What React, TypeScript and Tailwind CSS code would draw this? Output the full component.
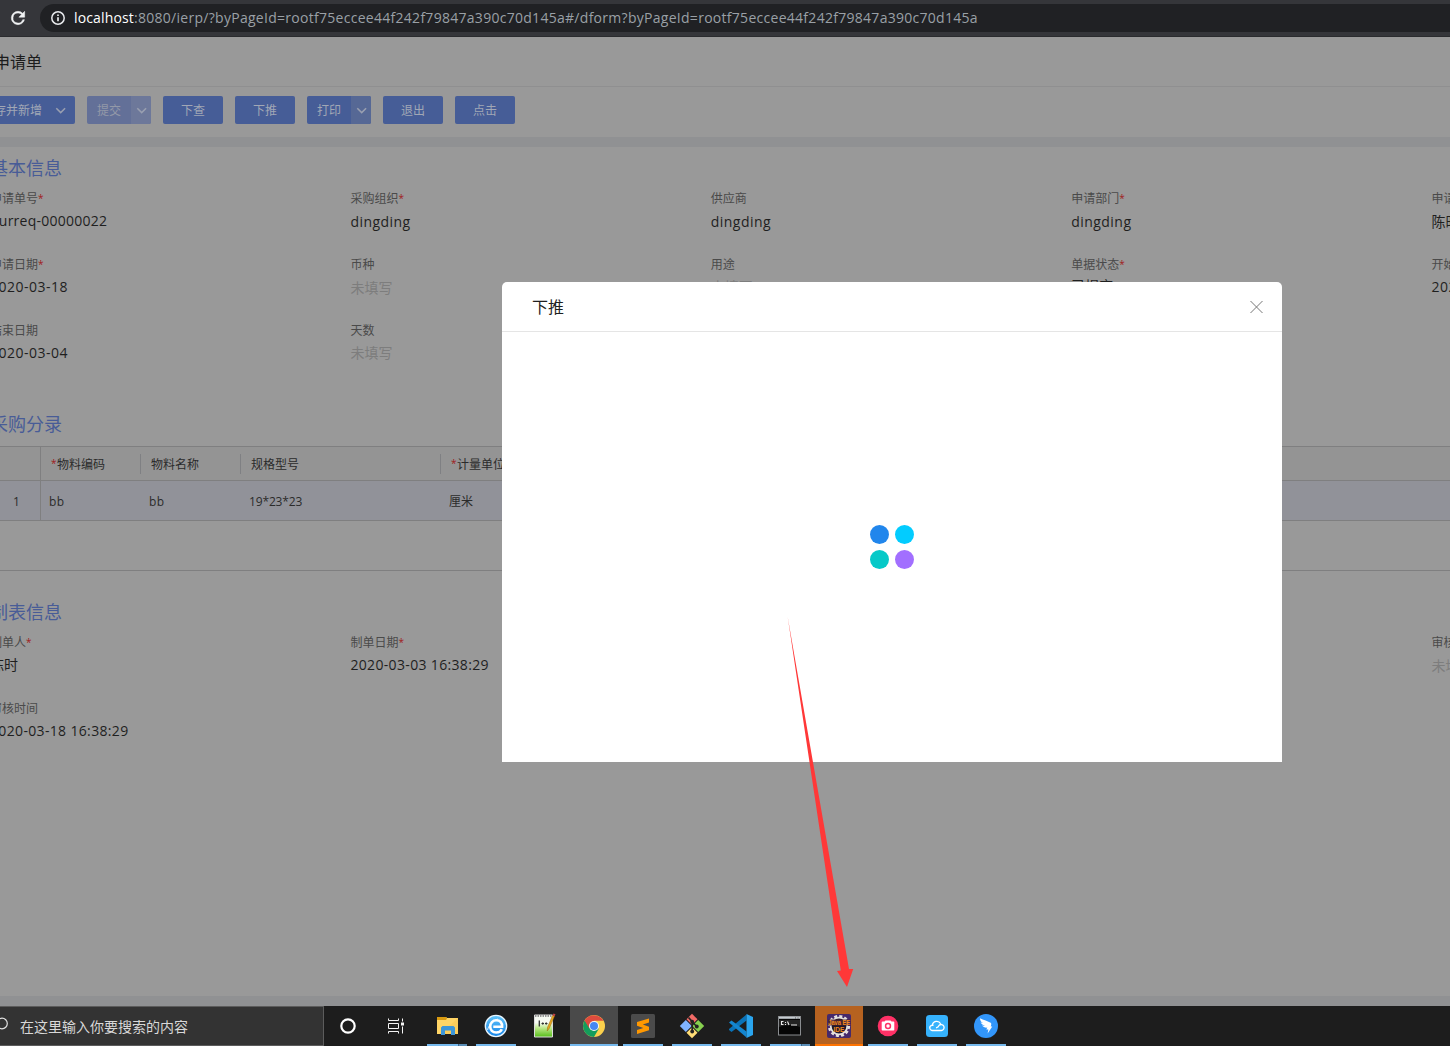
import React from 'react';

type FieldData = { label: string; required?: boolean; value?: string; empty?: boolean; offset?: string; tracking?: string };

const LOW = 'pt-[3px]';
const dateTrack = 'tracking-[0.5px]';
const dateTimeTrack = 'tracking-[0.34px]';
const nameTrack = 'tracking-[0.46px]';

const basicRows: (FieldData | null)[][] = [
  [
    { label: '申请单号', required: true, value: 'purreq-00000022', tracking: 'tracking-[0.24px]' },
    { label: '采购组织', required: true, value: 'dingding', offset: LOW, tracking: nameTrack },
    { label: '供应商', value: 'dingding', offset: LOW, tracking: nameTrack },
    { label: '申请部门', required: true, value: 'dingding', offset: LOW, tracking: nameTrack },
    { label: '申请人', required: true, value: '陈时', offset: LOW },
  ],
  [
    { label: '申请日期', required: true, value: '2020-03-18', tracking: dateTrack },
    { label: '币种', empty: true, offset: LOW },
    { label: '用途', empty: true },
    { label: '单据状态', required: true, value: '已提交', offset: 'pt-px' },
    { label: '开始日期', value: '2020-03-04', tracking: dateTrack },
  ],
  [
    { label: '结束日期', value: '2020-03-04', tracking: dateTrack },
    { label: '天数', empty: true },
    null,
    null,
    null,
  ],
];

const auditRows: (FieldData | null)[][] = [
  [
    { label: '制单人', required: true, value: '陈时' },
    { label: '制单日期', required: true, value: '2020-03-03 16:38:29', tracking: dateTimeTrack },
    null,
    null,
    { label: '审核人', empty: true, offset: LOW },
  ],
  [{ label: '审核时间', value: '2020-03-18 16:38:29', tracking: dateTimeTrack }, null, null, null, null],
];

function Field({ data }: { data: FieldData }) {
  return (
    <div className="flex flex-col whitespace-nowrap">
      <div className="flex h-5 items-center pt-[2px] text-[12px] leading-5 text-[#4a4a4a]">
        {data.label}
        {data.required && <span className="pb-[2px] text-[10px] text-[#a01b20]">*</span>}
      </div>
      <div className={data.offset ?? 'pt-[2px]'}>
        {data.empty ? (
          <div className="text-[14px] leading-[22px] text-[#7d7d7d]">未填写</div>
        ) : (
          <div className={`text-[14px] leading-[22px] text-[#1f1f1f] ${data.tracking ?? ''}`}>{data.value}</div>
        )}
      </div>
    </div>
  );
}

function FieldGrid({ rows }: { rows: (FieldData | null)[][] }) {
  return (
    <div className="-ml-[10px] grid w-[1802px] auto-rows-[66px] grid-cols-5 pt-[7px]">
      {rows.flat().map((f, i) => (f ? <Field key={i} data={f} /> : <div key={i} />))}
    </div>
  );
}

function SectionTitle({ children }: { children: React.ReactNode }) {
  return <h2 className="-ml-[10px] h-[26px] text-[18px] leading-[26px] text-[#485c97]">{children}</h2>;
}

function Chevron() {
  return (
    <svg width="11" height="8" viewBox="0 0 11 8" fill="none" stroke="#999fb0" strokeWidth="1.5">
      <path d="M1.3 2.2 L5.7 6.6 L10.1 2.2" />
    </svg>
  );
}

function Button({ children }: { children: React.ReactNode }) {
  return (
    <button className="flex h-7 w-[60px] items-center justify-center rounded-[2px] bg-[#465d97] pt-[2px] text-[12px] text-[#a1a7b5]">
      {children}
    </button>
  );
}

function SplitButton({ children, disabled }: { children: React.ReactNode; disabled?: boolean }) {
  return (
    <button className={`flex h-7 w-16 overflow-hidden rounded-[2px] text-[12px] ${disabled ? 'bg-[#637098] text-[#9399a8]' : 'bg-[#465d97] text-[#a1a7b5]'}`}>
      <span className="flex h-7 w-11 items-center justify-center pt-[2px]">{children}</span>
      <span className={`flex h-7 w-5 items-center justify-center ${disabled ? 'bg-[#6d789a]' : 'bg-[#566895]'}`}>
        <Chevron />
      </span>
    </button>
  );
}

function HeadCell({ width, required, children }: { width: string; required?: boolean; children: React.ReactNode }) {
  return (
    <div className={`flex h-[33px] shrink-0 items-center ${width}`}>
      <span className="flex w-full items-center pl-[10px] pt-[2px] text-[12px] text-[#2b2b2b]">
        {required && <span className="w-[6px] pb-[2px] text-[10px] text-[#a01b20]">*</span>}
        {children}
      </span>
      <span className="h-5 w-px shrink-0 bg-[#7f8083]" />
    </div>
  );
}

function EntryTable() {
  return (
    <div className="mt-[9px] h-[125px] w-full overflow-hidden border-y border-[#7f7f80] text-[12px] text-[#2b2b2b]">
      <div className="flex h-[34px] border-b border-[#7f7f80] bg-[#949494]">
        <div className="w-[41px] shrink-0 border-r border-[#7f7f80]" />
        <HeadCell width="w-[100px]" required>物料编码</HeadCell>
        <HeadCell width="w-[100px]">物料名称</HeadCell>
        <HeadCell width="w-[200px]">规格型号</HeadCell>
        <HeadCell width="w-[100px]" required>计量单位</HeadCell>
      </div>
      <div className="flex h-10 items-center border-b border-[#7f7f80] bg-[#919299]">
        <div className="flex h-full w-[41px] shrink-0 items-center border-r border-[#7f7f80] pl-[13px] pt-[2px]">1</div>
        <div className="w-[100px] pl-2 pt-[2px] tracking-[0.4px]">bb</div>
        <div className="w-[100px] pl-2 pt-[2px] tracking-[0.4px]">bb</div>
        <div className="w-[200px] pl-2 pt-[2px] tracking-[-0.15px]">19*23*23</div>
        <div className="w-[100px] pl-2 pt-[2px]">厘米</div>
      </div>
    </div>
  );
}

function BrowserBar() {
  return (
    <header className="flex h-[37px] w-full items-start border-b border-[#2a2b2e] bg-[#35363a] pt-1">
      <div className="flex h-7 w-10 items-center justify-start pl-[8px]">
        <svg width="20" height="20" viewBox="0 0 24 24" fill="#f1f3f4">
          <path d="M17.65 6.35A7.96 7.96 0 0 0 12 4a8 8 0 1 0 7.73 10h-2.08A6 6 0 1 1 12 6c1.66 0 3.14.69 4.22 1.78L13 11h7V4z" stroke="#f1f3f4" strokeWidth="0.6" />
        </svg>
      </div>
      <div className="flex h-7 flex-1 items-center rounded-l-full bg-[#202124] pl-[10px]">
        <svg width="16" height="16" viewBox="0 0 16 16" fill="none">
          <circle cx="8" cy="8" r="6.2" stroke="#e8eaed" strokeWidth="1.5" />
          <path d="M8 7.3v4" stroke="#e8eaed" strokeWidth="1.7" />
          <path d="M8 4.4v1.7" stroke="#e8eaed" strokeWidth="1.7" />
        </svg>
        <div className="ml-2 whitespace-nowrap text-[14px] leading-7 text-[#9aa0a6]">
          <span className="tracking-[0.15px] text-white">localhost</span>
          <span className="tracking-[0.281px]">:8080/ierp/?byPageId=rootf75eccee44f242f79847a390c70d145a#/dform?byPageId=rootf75eccee44f242f79847a390c70d145a</span>
        </div>
      </div>
    </header>
  );
}

function Modal() {
  return (
    <div className="absolute left-[502px] top-[282px] flex h-[480px] w-[780px] flex-col rounded-t-[5px] bg-white">
      <div className="flex h-[50px] items-center justify-between border-b border-[#e5e5e5] pl-[30px] pr-[18px]">
        <span className="text-[16px] leading-6 text-[#1f1f1f]">下推</span>
        <svg width="15" height="15" viewBox="0 0 15 15" stroke="#777" strokeWidth="1">
          <path d="M1.500 2 L13.500 14 M13.500 2 L1.500 14" />
        </svg>
      </div>
      <div className="flex flex-1 items-center justify-center">
        <div className="grid grid-cols-2 gap-[6px]">
          <span className="size-[19px] rounded-full bg-[#2186ec]" />
          <span className="size-[19px] rounded-full bg-[#02ccff]" />
          <span className="size-[19px] rounded-full bg-[#06c9c8]" />
          <span className="size-[19px] rounded-full bg-[#a26fff]" />
        </div>
      </div>
    </div>
  );
}

const ExplorerIcon = () => (
  <svg width="24" height="24" viewBox="0 0 24 24">
    <path d="M2 3h9l1 1h11v16H2z" fill="#ffd566" />
    <path d="M2 3h9l1 1.500-1 1.500H2z" fill="#d99a10" />
    <path d="M23 4v16H6z" fill="#f8c64f" opacity="0.5" />
    <path d="M6 21v-7.500l1.500-1.500h11l1.500 1.500V21h-4v-4.500h-6V21z" fill="#3d96d8" />
  </svg>
);
const IeIcon = () => (
  <svg width="24" height="24" viewBox="0 0 24 24">
    <defs>
      <linearGradient id="ie" x1="0" y1="0" x2="0" y2="1">
        <stop offset="0" stopColor="#62c5fb" />
        <stop offset="1" stopColor="#1584e8" />
      </linearGradient>
    </defs>
    <circle cx="12" cy="12" r="10.700" fill="url(#ie)" stroke="#e9f5fd" strokeWidth="1.300" />
    <path d="M17.800 15.200c-1 2.400-3.200 3.300-5.600 3.300-3.600 0-6-2.500-6-6s2.600-6.300 6.100-6.300c3.700 0 6 2.500 5.800 6.600H9.300" fill="none" stroke="#fff" strokeWidth="2.600" />
    <path d="M3.500 16C5 10.500 9 6.500 14 5" fill="none" stroke="#fff" strokeWidth="0.800" />
  </svg>
);
const NotepadIcon = () => (
  <svg width="24" height="26" viewBox="0 0 24 26">
    <defs>
      <linearGradient id="np" x1="0" y1="0" x2="0" y2="1">
        <stop offset="0.350" stopColor="#f6faf2" />
        <stop offset="0.600" stopColor="#bbe887" />
        <stop offset="1" stopColor="#54bd18" />
      </linearGradient>
    </defs>
    <path d="M1.500 2h18v22h-18z" fill="url(#np)" stroke="#dcdcdc" />
    <path d="M2 3h17" stroke="#777" strokeWidth="1.500" strokeDasharray="1.500 1" />
    <path d="M6.300 7.500v6" stroke="#333" strokeWidth="1.300" />
    <path d="M8.500 10.500h2.500M9.800 9.300v2.500M12 10.500h2.500M13.200 9.300v2.500" stroke="#333" strokeWidth="1" />
    <path d="M21.500 3L16.500 15l-2.300 3 .4-3.700L19.500 2.500z" fill="#e8a81f" stroke="#996611" strokeWidth="0.500" />
    <path d="M19.500 2.500l1-2 2 .8-1 2z" fill="#c44444" />
  </svg>
);
const ChromeIcon = () => (
  <svg width="22" height="22" viewBox="0 0 22 22">
    <circle cx="11" cy="11" r="11" fill="#fbd04c" />
    <path d="M11 11L1.500 5.500A11 11 0 0 0 11 22l4.800-8.300z" fill="#149d5c" />
    <path d="M1.500 5.500A11 11 0 0 1 20.500 5.700H11L6.400 13.500z" fill="#dd4b3e" />
    <circle cx="11" cy="11" r="5" fill="#f4f6f8" />
    <circle cx="11" cy="11" r="4" fill="#4587f3" />
  </svg>
);
const SublimeIcon = () => (
  <svg width="24" height="24" viewBox="0 0 24 24">
    <rect width="24" height="24" rx="1.500" fill="#4b4b4b" />
    <path d="M18 4.500v4l-6.200 2L18 12.700v3.600L6 20v-4l6.300-2L6 11.800V8z" fill="#ff9800" />
  </svg>
);
const GitIcon = () => (
  <svg width="26" height="26" viewBox="0 0 26 26">
    <path d="M13 0.800l5.500 5.500-5.500 5.500-5.500-5.500z" fill="#f16a66" />
    <path d="M6.800 7l6 6-6 6-6-6z" fill="#80b3ff" />
    <path d="M19.200 7l6 6-6 6-6-6z" fill="#87d04f" />
    <path d="M13 14.200l5.500 5.500-5.500 5.500-5.500-5.500z" fill="#ffdd77" />
    <path d="M9.500 4.500l3.700 4v10M13.200 9l4.500 4.500" fill="none" stroke="#222" strokeWidth="1.700" />
    <circle cx="13.200" cy="8.700" r="1.900" fill="#222" />
    <circle cx="17.800" cy="13.500" r="1.900" fill="#222" />
    <circle cx="13.200" cy="18.500" r="1.900" fill="#222" />
  </svg>
);
const CodeIcon = () => (
  <svg width="26" height="26" viewBox="0 0 26 26">
    <path d="M18.500 1.500v6L3.500 19 1 17v-1z" fill="#0a73b8" />
    <path d="M1 9.500L3.500 7.500 18.500 18.500v6z" fill="#1486cf" />
    <path d="M18.500 1l6.500 3v18l-6.500 3z" fill="#2aa5ee" />
  </svg>
);
const TerminalIcon = () => (
  <svg width="24" height="20" viewBox="0 0 24 20">
    <rect x="0.500" y="0.500" width="22" height="18.500" fill="#050505" stroke="#8a8d90" />
    <rect x="1" y="0.800" width="21" height="2" fill="#c5cbd0" />
    <path d="M17 2h1M19.500 2h1" stroke="#555" />
    <path d="M5.500 5.500H3.500v3h2M7.500 6v1M7.500 8v1M9.500 5.500l1.500 3.500M13 9h6" fill="none" stroke="#e8e8e8" strokeWidth="1.100" />
    <path d="M1 11q12-4 21 0v-7h-21z" fill="#fff" opacity="0.120" />
  </svg>
);
const JavaEeIcon = () => (
  <svg width="24" height="24" viewBox="0 0 24 24">
    <rect width="24" height="24" rx="2" fill="#45296b" />
    <circle cx="12" cy="12" r="9.800" fill="none" stroke="#e4e1de" strokeWidth="2.600" strokeDasharray="3 2.130" />
    <circle cx="12" cy="12" r="8.300" fill="#20182b" stroke="#e4e1de" strokeWidth="1.800" />
    <rect x="1" y="5.500" width="22.500" height="6" fill="#4a2430" opacity="0.850" />
    <text x="12.200" y="11.200" textAnchor="middle" textLength="22" lengthAdjust="spacingAndGlyphs" fontSize="7.500" fontWeight="bold" fontFamily="Liberation Sans, sans-serif" fill="#f28a20">Java EE</text>
    <text x="12" y="17.500" textAnchor="middle" textLength="11" lengthAdjust="spacingAndGlyphs" fontSize="7.500" fontWeight="bold" fontFamily="Liberation Sans, sans-serif" fill="#f28a20">IDE</text>
  </svg>
);
const CameraIcon = () => (
  <svg width="22" height="22" viewBox="0 0 22 22">
    <circle cx="11" cy="11" r="10.300" fill="#ff3166" />
    <path d="M5.500 6.500h2l1-1h5l1 1h2q.8 0 .8.800v7.500q0 .8-.8.800h-11q-.8 0-.8-.8V7.300q0-.8.8-.8z" fill="#fff" />
    <circle cx="11" cy="11" r="3.200" fill="#ff3166" />
    <circle cx="11" cy="11" r="1.700" fill="#fff" />
  </svg>
);
const CloudIcon = () => (
  <svg width="22" height="22" viewBox="0 0 22 22">
    <rect width="22" height="22" rx="3.500" fill="#36b2fc" />
    <path d="M15.500 15.500H6a2.600 2.600 0 0 1-.3-5.100H7.500M6.300 10.200a4.400 4.400 0 0 1 8.300-1.400M10 12.800q2.300-.6 3.200-2.600a3 3 0 1 1 2.300 5.300" fill="none" stroke="#fff" strokeWidth="1.300" />
  </svg>
);
const DingIcon = () => (
  <svg width="24" height="24" viewBox="0 0 24 24">
    <circle cx="12" cy="12" r="12" fill="#3296fa" />
    <path d="M6 4.200c3.200 1.900 8.300 2.900 10.700 4.600 1 .8.600 2.200 0 3.700h1.600L13.600 19.500l.8-4H12.300l1-1.900c-2 .3-4.200-.5-5.400-2.300 1 .5 2.500.6 3.300.4-2.100-.4-3.900-1.600-4.600-3.500.6.400 1.600.8 2.400.9C7.200 8.200 6 6.500 6 4.200z" fill="#fff" />
  </svg>
);

type Task = { icon: React.ReactNode; state: 'open' | 'multi' | 'idle' | 'active' | 'alert' };

const tasks: Task[] = [
  { icon: <ExplorerIcon />, state: 'multi' },
  { icon: <IeIcon />, state: 'open' },
  { icon: <NotepadIcon />, state: 'idle' },
  { icon: <ChromeIcon />, state: 'active' },
  { icon: <SublimeIcon />, state: 'open' },
  { icon: <GitIcon />, state: 'open' },
  { icon: <CodeIcon />, state: 'open' },
  { icon: <TerminalIcon />, state: 'multi' },
  { icon: <JavaEeIcon />, state: 'alert' },
  { icon: <CameraIcon />, state: 'open' },
  { icon: <CloudIcon />, state: 'open' },
  { icon: <DingIcon />, state: 'open' },
];

const slotBackground = { open: '', multi: '', idle: '', active: 'bg-[#4a4a4a]', alert: 'bg-[#b66220]' };

function Underline({ state }: { state: Task['state'] }) {
  if (state === 'idle') return <div className="h-0.5" />;
  if (state === 'active') return <div className="h-0.5 w-12 bg-[#76b9ed]" />;
  if (state === 'alert') return <div className="h-0.5 w-12 bg-[#ff7300]" />;
  if (state === 'multi')
    return (
      <div className="flex h-0.5 w-10">
        <div className="w-8 border-r border-[#3f6587] bg-[#76b9ed]" />
        <div className="w-2 bg-[#5a8db6]" />
      </div>
    );
  return <div className="h-0.5 w-10 bg-[#76b9ed]" />;
}

function Taskbar() {
  return (
    <footer className="flex h-10 w-full bg-[#1d1d1d]">
      <div className="flex h-10 w-[324px] items-center overflow-hidden border-y border-r border-[#5c5c5c] bg-[#333333]">
        <svg width="20" height="20" viewBox="0 0 20 20" fill="none" className="shrink-0">
          <circle cx="2" cy="7.500" r="5.300" stroke="#e0e0e0" strokeWidth="1.200" />
        </svg>
        <span className="pt-[2px] text-[14px] leading-5 text-[#d8d8d8]">在这里输入你要搜索的内容</span>
      </div>
      <div className="flex w-12 items-center justify-center">
        <svg width="18" height="18" viewBox="0 0 18 18" fill="none">
          <circle cx="9" cy="9" r="6.700" stroke="#fff" strokeWidth="2.200" />
        </svg>
      </div>
      <div className="mr-[3px] flex w-12 items-center justify-center">
        <svg width="18" height="18" viewBox="0 0 18 18" fill="none" stroke="#f4f4f4" strokeWidth="1">
          <path d="M1.500 1.500v2h10v-2M1.500 16.500v-2h10v2M1.500 6.500h10v5h-10zM15.500 1.500v3M15.500 9.500v7" />
          <rect x="14.500" y="6" width="2" height="2" fill="#fff" />
        </svg>
      </div>
      <div className="flex gap-px">
        {tasks.map((t, i) => (
          <div key={i} className={`flex h-10 w-12 flex-col items-center ${slotBackground[t.state]}`}>
            <div className="flex h-[38px] items-center justify-center pt-[2px]">{t.icon}</div>
            <Underline state={t.state} />
          </div>
        ))}
      </div>
    </footer>
  );
}

export default function App() {
  return (
    <div className="relative flex h-[1046px] w-[1450px] flex-col overflow-hidden bg-[#999999] font-['Open_Sans','Noto_Sans_CJK_SC',sans-serif]">
      <BrowserBar />
      <main className="flex w-full flex-1 flex-col overflow-hidden">
        <div className="flex h-[50px] items-center border-b border-[#8f8f90]">
          <h1 className="-ml-[6px] text-[16px] leading-6 text-[#1c1c1c]">申请单</h1>
        </div>
        <div className="flex h-[50px] items-center gap-3 pb-[4px]">
          <button className="flex h-7 w-[75px] items-center justify-between rounded-r-[2px] bg-[#465d97] pr-[9px] text-[12px] text-[#a1a7b5]">
            <span className="-ml-[6px] whitespace-nowrap pt-[2px]">存并新增</span>
            <Chevron />
          </button>
          <SplitButton disabled>提交</SplitButton>
          <Button>下查</Button>
          <Button>下推</Button>
          <SplitButton>打印</SplitButton>
          <Button>退出</Button>
          <Button>点击</Button>
        </div>
        <div className="h-[10px] bg-[#909193]" />
        <div className="flex-1 pt-2">
          <SectionTitle>基本信息</SectionTitle>
          <FieldGrid rows={basicRows} />
          <div className="pt-[25px]">
            <SectionTitle>采购分录</SectionTitle>
            <EntryTable />
          </div>
          <div className="pt-7">
            <SectionTitle>制表信息</SectionTitle>
            <FieldGrid rows={auditRows} />
          </div>
        </div>
        <div className="h-[10px] bg-[#909193]" />
      </main>
      <Taskbar />
      <Modal />
      <svg className="pointer-events-none absolute left-[780px] top-[610px]" width="80" height="385" viewBox="0 0 80 385">
        <path d="M7.700 7L69 359L73.200 359L67 377L57 361L60.800 360.500Z" fill="#ff3838" />
      </svg>
    </div>
  );
}
